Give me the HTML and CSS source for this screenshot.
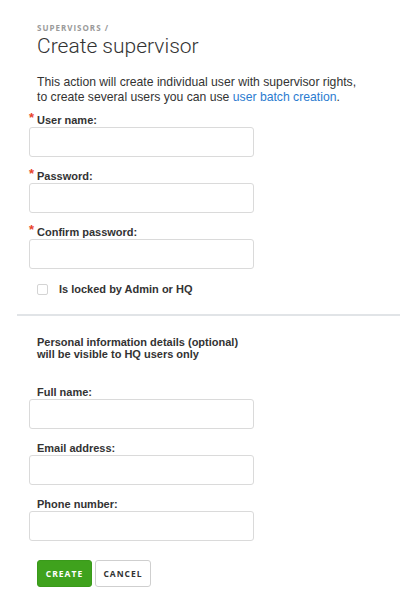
FILE: index.html
```html
<!DOCTYPE html>
<html>
<head>
<meta charset="utf-8">
<link rel="stylesheet" href="styles.css">
</head>
<body>
<div class="page">
  <header class="header">
    <div class="crumb">SUPERVISORS /</div>
    <h1 class="title">Create supervisor</h1>
  </header>
  <p class="intro">This action will create individual user with supervisor rights,<br>to create several users you can use <a class="link" href="#">user batch creation</a>.</p>

  <div class="field first">
    <label class="label"><span class="req">*</span>User name:</label>
    <input class="input" type="text">
  </div>
  <div class="field">
    <label class="label"><span class="req">*</span>Password:</label>
    <input class="input" type="password">
  </div>
  <div class="field">
    <label class="label"><span class="req">*</span>Confirm password:</label>
    <input class="input" type="password">
  </div>
  <div class="check-row">
    <span class="checkbox"></span>
    <span class="check-label">Is locked by Admin or HQ</span>
  </div>

  <hr class="sep">

  <p class="note">Personal information details (optional)<br>will be visible to HQ users only</p>

  <div class="field after-note">
    <label class="label">Full name:</label>
    <input class="input" type="text">
  </div>
  <div class="field">
    <label class="label">Email address:</label>
    <input class="input" type="text">
  </div>
  <div class="field">
    <label class="label">Phone number:</label>
    <input class="input" type="text">
  </div>

  <div class="actions">
    <button class="btn btn-primary">CREATE</button>
    <button class="btn btn-default">CANCEL</button>
  </div>
</div>
</body>
</html>
```

FILE: styles.css
```css
* { box-sizing: border-box; }
body {
  margin: 0;
  background: #fff;
  font-family: "Liberation Sans", Arial, sans-serif;
  color: #333;
}
.page {
  padding-top: 22px;
}
.header {
  padding-left: 37px;
}
.crumb {
  font-family: "Open Sans", sans-serif;
  font-weight: 700;
  font-size: 8px;
  letter-spacing: 1px;
  color: #9a9a9a;
  line-height: 11px;
}
.title {
  margin: 1px 0 0;
  font-family: Roboto, sans-serif;
  font-weight: 300;
  font-size: 21px;
  line-height: 24px;
  color: #333;
}
.intro {
  margin: 17px 0 0;
  padding-left: 37px;
  font-size: 12.2px;
  line-height: 14.5px;
  color: #333;
}
.link {
  color: #2b7bd0;
  text-decoration: none;
}
.field {
  display: flex;
  flex-direction: column;
  padding-left: 29px;
  margin-top: 13px;
}
.field.first {
  margin-top: 10px;
}
.field.after-note {
  margin-top: 26px;
}
.label {
  position: relative;
  padding-left: 8px;
  font-size: 11px;
  font-weight: 700;
  line-height: 12px;
  height: 12px;
  color: #333;
}
.req {
  position: absolute;
  left: 0;
  top: -2px;
  color: #e8442a;
  font-size: 13px;
}
.input {
  margin-top: 1px;
  width: 225px;
  height: 30px;
  border: 1px solid #dadada;
  border-radius: 3px;
  background: #fff;
  outline: none;
}
.check-row {
  display: flex;
  align-items: center;
  padding-left: 37px;
  margin-top: 13px;
  height: 14px;
}
.checkbox {
  width: 11px;
  height: 11px;
  border: 1px solid #d4d4d4;
  border-radius: 2px;
  background: #fff;
}
.check-label {
  margin-left: 11px;
  font-size: 11px;
  font-weight: 700;
  color: #333;
}
.sep {
  margin: 18px 13px 0 17px;
  border: 0;
  height: 2px;
  background: #e1e4e7;
}
.note {
  margin: 20px 0 0;
  padding-left: 37px;
  font-size: 11px;
  font-weight: 700;
  line-height: 12px;
  color: #333;
}
.actions {
  display: flex;
  gap: 3px;
  padding-left: 37px;
  margin-top: 19px;
}
.btn {
  height: 27px;
  padding: 0 6px;
  font-family: "Open Sans", sans-serif;
  font-size: 8.5px;
  font-weight: 700;
  letter-spacing: 1px;
  border-radius: 3px;
  cursor: pointer;
}
.btn-primary {
  width: 55px;
  background: #3fa21d;
  border: 1px solid #3a9a1b;
  color: #fff;
}
.btn-default {
  width: 56px;
  background: #fff;
  border: 1px solid #cfcfcf;
  color: #333;
}
```
